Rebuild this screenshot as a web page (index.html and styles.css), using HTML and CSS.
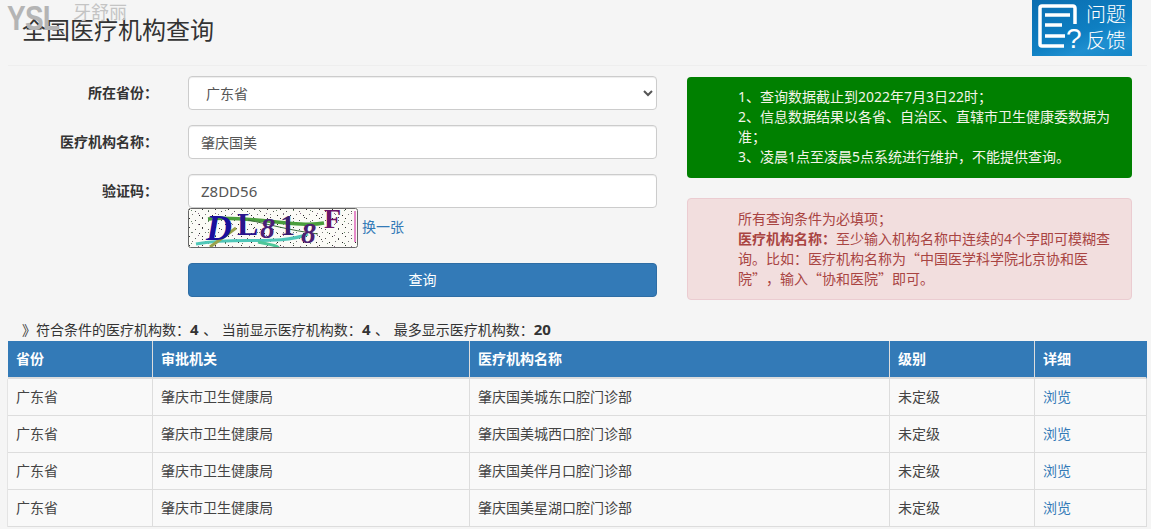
FILE: index.html
```html
<!DOCTYPE html>
<html lang="zh-CN">
<head>
<meta charset="utf-8">
<title>全国医疗机构查询</title>
<link rel="stylesheet" href="styles.css">
</head>
<body>
<div class="watermark"><span class="wm-latin">YSL</span><span class="wm-cjk">牙舒丽</span></div>
<header class="page-header">
  <h1 class="page-title">全国医疗机构查询</h1>
  <a class="feedback" href="#">
    <svg class="feedback-icon" viewBox="0 0 42 48" width="42" height="48">
      <path d="M38 20V4a2 2 0 0 0-2-2H5a2 2 0 0 0-2 2v36a2 2 0 0 0 2 2h22" fill="none" stroke="#fff" stroke-width="3.5"/>
      <path d="M8 11h25M8 21h17M8 32h20" stroke="#fff" stroke-width="3.5" fill="none"/>
    </svg>
    <span class="feedback-q">?</span>
    <span class="feedback-text"><span>问题</span><span>反馈</span></span>
  </a>
</header>
<main class="top">
  <form class="query-form">
    <div class="form-row">
      <label class="form-label">所在省份：</label>
      <select class="control control-select"><option>广东省</option></select>
    </div>
    <div class="form-row">
      <label class="form-label">医疗机构名称：</label>
      <input class="control" type="text" value="肇庆国美">
    </div>
    <div class="form-row form-row-captcha">
      <label class="form-label">验证码：</label>
      <div class="captcha-group">
        <input class="control control-code" type="text" value="Z8DD56">
        <div class="captcha-line">
          <svg class="captcha" width="170" height="40" viewBox="0 0 170 40">
            <defs>
              <pattern id="noise" width="13" height="9" patternUnits="userSpaceOnUse">
                <rect x="1" y="1" width="1" height="1" fill="#333"/>
                <rect x="7" y="3" width="1" height="1" fill="#555"/>
                <rect x="11" y="7" width="1" height="1" fill="#222"/>
                <rect x="4" y="6" width="1" height="1" fill="#777"/>
              </pattern>
              <pattern id="noise2" width="17" height="11" patternUnits="userSpaceOnUse">
                <rect x="3" y="2" width="1" height="1" fill="#6a8a6a"/>
                <rect x="10" y="5" width="1" height="1" fill="#8a6a8a"/>
                <rect x="14" y="9" width="1" height="1" fill="#444"/>
              </pattern>
            </defs>
            <rect width="170" height="40" fill="#fbfbf6"/>
            <rect width="170" height="40" fill="url(#noise)"/>
            <rect width="170" height="40" fill="url(#noise2)"/>
            <path d="M20 11C60 7 110 20 136 15" stroke="#4a9e3c" stroke-width="3.5" fill="none"/>
            <path d="M60 12C80 16 100 22 130 26" stroke="#3a6a3a" stroke-width="1" fill="none"/>
            <path d="M8 36C50 28 90 38 120 26" stroke="#4fc7b8" stroke-width="3" fill="none"/>
            <path d="M22 39L48 20" stroke="#9aa24a" stroke-width="3" fill="none"/>
            <path d="M70 34C80 36 90 38 90 39" stroke="#4fc79a" stroke-width="3" fill="none"/>
            <path d="M167 3V34" stroke="#e58ac8" stroke-width="2"/>
            <text class="cap cap-d" x="18" y="32">D</text>
            <text class="cap cap-l" x="49" y="27">L</text>
            <text class="cap cap-8" x="72" y="30">8</text>
            <text class="cap cap-1" x="92" y="27">1</text>
            <text class="cap cap-8b" x="113" y="35">8</text>
            <text class="cap cap-f" x="136" y="20">F</text>
            <rect x=".5" y=".5" width="169" height="39" rx="2" fill="none" stroke="#666"/>
          </svg>
          <a class="link link-swap" href="#">换一张</a>
        </div>
        <button class="submit" type="button">查询</button>
      </div>
    </div>
  </form>
  <aside class="notes">
    <div class="note note-green">
      1、查询数据截止到2022年7月3日22时；<br>
      2、信息数据结果以各省、自治区、直辖市卫生健康委数据为准；<br>
      3、凌晨1点至凌晨5点系统进行维护，不能提供查询。
    </div>
    <div class="note note-red">
      所有查询条件为必填项；<br>
      <b>医疗机构名称：</b>至少输入机构名称中连续的4个字即可模糊查询。比如：医疗机构名称为<span class="cjk-quote">“</span>中国医学科学院北京协和医院<span class="cjk-quote">”</span>，输入<span class="cjk-quote">“</span>协和医院<span class="cjk-quote">”</span>即可。
    </div>
  </aside>
</main>
<p class="summary">》符合条件的医疗机构数：<b>4</b> 、 当前显示医疗机构数：<b>4</b> 、 最多显示医疗机构数：<b>20</b></p>
<table class="results">
  <colgroup>
    <col class="col-a"><col class="col-b"><col class="col-c"><col class="col-d"><col class="col-e">
  </colgroup>
  <thead>
    <tr><th>省份</th><th>审批机关</th><th>医疗机构名称</th><th>级别</th><th>详细</th></tr>
  </thead>
  <tbody>
    <tr><td>广东省</td><td>肇庆市卫生健康局</td><td>肇庆国美城东口腔门诊部</td><td>未定级</td><td><a class="link" href="#">浏览</a></td></tr>
    <tr><td>广东省</td><td>肇庆市卫生健康局</td><td>肇庆国美城西口腔门诊部</td><td>未定级</td><td><a class="link" href="#">浏览</a></td></tr>
    <tr><td>广东省</td><td>肇庆市卫生健康局</td><td>肇庆国美伴月口腔门诊部</td><td>未定级</td><td><a class="link" href="#">浏览</a></td></tr>
    <tr><td>广东省</td><td>肇庆市卫生健康局</td><td>肇庆国美星湖口腔门诊部</td><td>未定级</td><td><a class="link" href="#">浏览</a></td></tr>
  </tbody>
</table>
</body>
</html>
```
FILE: styles.css
```css
* { box-sizing: border-box; }
html, body { height: 100%; }
body {
  margin: 0;
  padding: 0 4px 0 8px;
  background: #f5f5f5;
  color: #333;
  font: 14px/20px "Noto Sans", "Noto Sans CJK SC", sans-serif;
  text-spacing-trim: space-all;
  overflow: hidden;
  position: relative;
}
.watermark {
  position: absolute;
  left: 7px;
  top: -3px;
  color: #b4b4b4;
  display: flex;
  align-items: flex-start;
}
.wm-latin {
  display: block;
  width: 66px;
  font: 700 35px/42px "Liberation Sans", sans-serif;
  letter-spacing: -1px;
  transform: scaleX(.8);
  transform-origin: left center;
}
.wm-cjk { font-size: 18px; line-height: 24px; margin-top: 3px; color: #c4c4c4; }

.page-header {
  display: flex;
  justify-content: space-between;
  align-items: flex-start;
  height: 66px;
  border-bottom: 1px solid #eee;
  padding: 0 15px 0 14px;
}
.page-title {
  margin: 13px 0 0;
  font-size: 24px;
  line-height: 34px;
  font-weight: 400;
  color: #333;
}
.feedback {
  position: relative;
  display: flex;
  align-items: center;
  width: 100px;
  height: 56px;
  padding-left: 5px;
  background: linear-gradient(160deg, #0a6db0 0%, #0e7fc2 55%, #1f8fd0 75%, #1587c8 100%);
  color: #fff;
  text-decoration: none;
}
.feedback-icon { flex: none; }
.feedback-q {
  position: absolute;
  left: 34px;
  top: 23px;
  font: 400 28px/32px "Liberation Sans", sans-serif;
}
.feedback-text {
  display: flex;
  flex-direction: column;
  margin-left: 7px;
  font-size: 20px;
  line-height: 26px;
  font-weight: 300;
}

.top { display: flex; gap: 30px; margin-top: 10px; }
.query-form { width: 649px; flex: none; display: flex; flex-direction: column; gap: 15px; }
.form-row { display: flex; gap: 30px; align-items: flex-start; }
.form-label {
  flex: none;
  width: 150px;
  text-align: right;
  font-weight: 700;
  line-height: 20px;
  padding-top: 7px;
}
.control {
  display: block;
  width: 469px;
  height: 34px;
  padding: 6px 12px;
  border: 1px solid #ccc;
  border-radius: 4px;
  background: #fff;
  color: #555;
  font: inherit;
  box-shadow: inset 0 1px 1px rgba(0,0,0,.075);
}
.control-select { padding-left: 13px; }
.control-code { font-size: 15px; }
.captcha-group { display: flex; flex-direction: column; }
.captcha-line { display: flex; align-items: center; gap: 4px; }
.captcha { display: block; flex: none; }
.cap { font-family: "Liberation Serif", serif; font-weight: 700; }
.cap-d { font-size: 36px; font-style: italic; fill: #1a0f9c; }
.cap-l { font-size: 32px; fill: #2a148c; }
.cap-8 { font-size: 30px; font-style: italic; fill: #4a1f78; }
.cap-1 { font-size: 30px; fill: #3a1f70; }
.cap-8b { font-size: 30px; font-style: italic; fill: #4d2070; }
.cap-f { font-size: 28px; fill: #6a1468; }
.link { color: #337ab7; text-decoration: none; }
.link-swap { position: relative; top: -1px; }
.submit {
  margin-top: 15px;
  width: 469px;
  height: 34px;
  border: 1px solid #2e6da4;
  border-radius: 4px;
  background: #337ab7;
  color: #fff;
  font: inherit;
}

.notes { width: 445px; flex: none; display: flex; flex-direction: column; gap: 20px; padding-top: 1px; }
.note { border-radius: 4px; border: 1px solid transparent; padding: 10px 20px 10px 50px; }
.note-green { background: #008000; color: #f4f4e8; border: 0; padding: 10px 21px 11px 51px; }
.note-red { background: #f2dede; color: #a94442; border-color: #ebccd1; }
.cjk-quote { font-family: "Noto Sans CJK SC", sans-serif; line-height: 0; }

.summary { margin: 20px 0 0; padding-left: 14px; height: 21px; line-height: 20px; word-spacing: 1px; }
.summary b { font-size: 15px; line-height: 0; }

.results {
  table-layout: fixed;
  width: 1139px;
  border-collapse: separate;
  border-spacing: 0;
}
.col-a { width: 145px; }
.col-b { width: 317px; }
.col-c { width: 420px; }
.col-d { width: 145px; }
.col-e { width: 112px; }
.results th {
  height: 37px;
  padding: 8px;
  background: #337ab7;
  color: #fff;
  text-align: left;
  font-weight: 700;
  border-right: 1px solid #ddd;
  border-bottom: 2px solid #ddd;
}
.results th:last-child { border-right-color: #337ab7; }
.results td {
  height: 37px;
  padding: 8px;
  background: #f9f9f9;
  border-right: 1px solid #ddd;
  border-bottom: 1px solid #ddd;
  color: #444;
}
.results td:first-child { box-shadow: -1px 0 0 #e4e4e4; }
```
